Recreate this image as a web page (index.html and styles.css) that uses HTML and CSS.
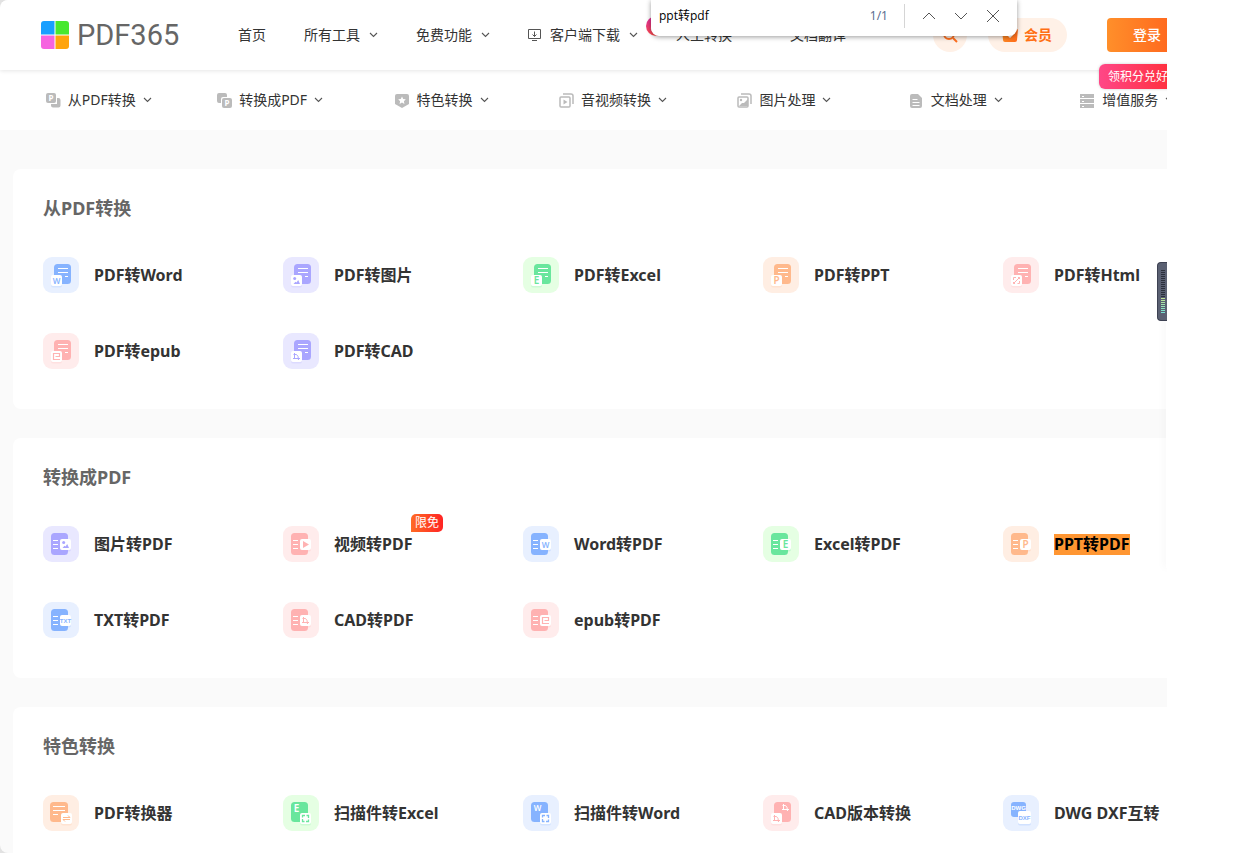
FILE: index.html
```html
<!DOCTYPE html>
<html lang="zh-CN">
<head>
<meta charset="utf-8">
<title>PDF365</title>
<link rel="stylesheet" href="styles.css">
</head>
<body>
<svg class="defs" aria-hidden="true">
  <defs>
    <linearGradient id="fire" x1="0" y1="0" x2="0" y2="1"><stop offset="0" stop-color="#d92ba0"/><stop offset="1" stop-color="#ff4b4b"/></linearGradient>
    <linearGradient id="crown" x1="0" y1="0" x2="1" y2="0"><stop offset="0" stop-color="#ff8b26"/><stop offset="1" stop-color="#ff6a1a"/></linearGradient>
    <g id="from"><rect x="11" y="7" width="17" height="20" rx="3.5" fill="currentColor"/><path d="M15 11.5h10M15 15.500h10M22 19.500h3" stroke="#fff"/><rect x="8" y="19" width="11" height="11.500" rx="2" fill="currentColor" opacity=".2"/><rect x="8" y="18" width="11" height="11" rx="2" fill="#fff"/></g>
    <g id="to"><rect x="8" y="7" width="17" height="22" rx="3.5" fill="currentColor"/><path d="M10 14.500h5M10 18.500h5M10 22.500h5" stroke="#fff"/><rect x="17" y="14" width="11" height="11.500" rx="2" fill="currentColor" opacity=".25"/><rect x="17" y="13" width="11" height="11" rx="2" fill="#fff"/></g>
    <g id="scan"><rect x="8" y="7" width="17" height="20" rx="3.5" fill="currentColor"/><rect x="17" y="19" width="11" height="11.500" rx="2" fill="currentColor" opacity=".2"/><rect x="17" y="18" width="11" height="11" rx="2" fill="#fff"/><path d="M19.500 22.500v-2H22M23.500 20.500h2V23M25.500 24.500v2H23M21.500 26.500h-2V24" fill="none" stroke="currentColor" stroke-width="1.300"/></g>
    <g id="pic" fill="currentColor"><circle cx="-1.800" cy="-2" r="1.500"/><path d="M-3 3.500 -1 1.200 0 2 1.700 -.5 3.500 3.500z"/></g>
    <path id="cad" d="M-2-3.500V2M-3.500 2H3.500M-3-2H0Q2-1 2 3.500" fill="none" stroke="currentColor"/>
    <path id="epub" d="M3.500 3H-3V-3H3V0H-1" fill="none" stroke="currentColor" stroke-width="1.200"/>
    <path id="chev" d="m1 1 3.500 3.500L8 1" fill="none" stroke="#555" stroke-width="1.100"/>
  </defs>
</svg>
<div class="frame">
<div class="page">
  <header class="header">
    <a class="logo" href="#" aria-label="PDF365">
      <svg width="28" height="28" viewBox="0 0 28 28"><path d="M3 0H13.500V13.500H0V3Q0 0 3 0" fill="#189fff"/><path d="M14.500 0H25q3 0 3 3v10.500H14.500" fill="#48e82e"/><path d="M0 14.500H13.500V28H3Q0 28 0 25" fill="#f663e0"/><path d="M14.500 14.500H28V25q0 3-3 3H14.500" fill="#ffa40c"/></svg>
      <span>PDF365</span>
    </a>
    <nav class="nav">
      <a href="#">首页</a>
      <a href="#">所有工具<svg width="9" height="6"><use href="#chev"/></svg></a>
      <a href="#">免费功能<svg width="9" height="6"><use href="#chev"/></svg></a>
      <a href="#"><svg width="13" height="12" viewBox="0 0 13 12" fill="none" stroke="#555"><path d="M.5.5h12v9H.5zM4 11.500h5M6.500 2.500v5M4.500 5.500l2 2 2-2"/></svg>客户端下载<svg width="9" height="6"><use href="#chev"/></svg></a>
      <a href="#"><svg class="flame" width="20" height="20" viewBox="0 0 20 20"><circle cx="10" cy="10" r="10" fill="url(#fire)"/><path d="M10 3q1 4 4 6 2 6-4 8-6-1-5-7l2 2q0-6 3-9" fill="#fff"/></svg>人工转换</a>
      <a class="translate" href="#">文档翻译</a>
    </nav>
    <button class="search" aria-label="搜索"><svg width="16" height="16" viewBox="0 0 16 16" fill="none" stroke="#ff6f1e" stroke-width="2"><circle cx="7" cy="7" r="5"/><path d="m11 11 4 4"/></svg></button>
    <a class="vip" href="#"><svg width="18" height="16" viewBox="0 0 18 16"><path d="M1 2 5 5 9 0l4 5 4-3-1 11q0 2-2 2H4q-2 0-2-2z" fill="url(#crown)"/><path d="m6 7 3 3 3-3" fill="none" stroke="#fff" stroke-width="1.500"/></svg>会员</a>
    <div class="account"><button class="login">登录</button><span class="gift">领积分兑好礼</span></div>
  </header>

  <nav class="subnav">
    <a href="#"><svg width="15" height="15" viewBox="0 0 15 15"><rect width="10" height="10" rx="2" fill="#bbb"/><path d="M11 5h1.500q2 0 2 2v5.500q0 2-2 2H7q-2 0-2-2V11h6z" fill="#bbb"/><text x="5" y="8" class="mini">P</text></svg>从PDF转换<svg width="9" height="6"><use href="#chev"/></svg></a>
    <a href="#"><svg width="15" height="15" viewBox="0 0 15 15"><path d="M2 0h6q2 0 2 2v2H6Q4 4 4 6v4H2Q0 10 0 8V2Q0 0 2 0" fill="#bbb"/><rect x="5" y="5" width="10" height="10" rx="2" fill="#bbb"/><text x="10" y="13" class="mini">P</text></svg>转换成PDF<svg width="9" height="6"><use href="#chev"/></svg></a>
    <a href="#"><svg width="15" height="15" viewBox="0 0 15 15"><path d="M2 1h10q2 0 2 2v8l-7 4-7-4V3q0-2 2-2" fill="#bbb"/><path d="m7 3.500 1.200 2.500 2.600.3-1.900 1.900.5 2.700L7 9.600l-2.400 1.300.5-2.700-1.900-1.900L5.800 6z" fill="#fff"/></svg>特色转换<svg width="9" height="6"><use href="#chev"/></svg></a>
    <a href="#"><svg width="15" height="15" viewBox="0 0 15 15" fill="none" stroke="#bbb" stroke-width="1.500"><path d="M4 1h8q2 0 2 2v8"/><rect x="1" y="4" width="10" height="10" rx="1"/><path d="m4.500 6.500 4 2.500-4 2.500z" fill="#bbb" stroke="none"/></svg>音视频转换<svg width="9" height="6"><use href="#chev"/></svg></a>
    <a href="#"><svg width="15" height="15" viewBox="0 0 15 15" fill="none" stroke="#bbb" stroke-width="1.500"><path d="M4 1h8q2 0 2 2v8"/><rect x="1" y="4" width="10" height="10" rx="1"/><circle cx="4" cy="7" r="1.200" fill="#bbb" stroke="none"/><path d="m2 13 3-3h2l4-4v7z" fill="#bbb" stroke="none"/></svg>图片处理<svg width="9" height="6"><use href="#chev"/></svg></a>
    <a href="#"><svg width="15" height="15" viewBox="0 0 15 15"><path d="M3 1h6l4 4v8q0 2-2 2H3q-2 0-2-2V3q0-2 2-2" fill="#bbb"/><path d="M3.500 6.500h5M3.500 9.500h7M3.500 12.500h7" stroke="#fff"/></svg>文档处理<svg width="9" height="6"><use href="#chev"/></svg></a>
    <a href="#"><svg width="15" height="15" viewBox="0 0 15 15"><path d="M0 1h14v4H0zM0 6h14v4H0zM0 11h14v4H0z" fill="#bbb"/><path d="M2 3.500h2M2 8.500h2M2 13.500h2" stroke="#fff"/></svg>增值服务<svg width="9" height="6"><use href="#chev"/></svg></a>
  </nav>

  <main class="content">
    <section class="card">
      <h2>从PDF转换</h2>
      <div class="tools">
        <a href="#"><svg class="tile blue" viewBox="0 0 36 36"><use href="#from"/><text x="13.500" y="26.500">W</text></svg>PDF转Word</a>
        <a href="#"><svg class="tile purple" viewBox="0 0 36 36"><use href="#from"/><use href="#pic" x="13.500" y="23.500"/></svg>PDF转图片</a>
        <a href="#"><svg class="tile green" viewBox="0 0 36 36"><use href="#from"/><text x="13.500" y="27" class="big">E</text></svg>PDF转Excel</a>
        <a href="#"><svg class="tile orange" viewBox="0 0 36 36"><use href="#from"/><text x="13.500" y="27" class="big">P</text></svg>PDF转PPT</a>
        <a href="#"><svg class="tile pink" viewBox="0 0 36 36"><use href="#from"/><path d="M10.500 23v-2.500H13M14.500 26.500h2V24M16.500 20.500l-6 6M15 20.500h1.500V22M12 26.500h-1.500V25" fill="none" stroke="currentColor"/></svg>PDF转Html</a>
        <a href="#"><svg class="tile pink" viewBox="0 0 36 36"><use href="#from"/><use href="#epub" x="13.500" y="23.500"/></svg>PDF转epub</a>
        <a href="#"><svg class="tile purple" viewBox="0 0 36 36"><use href="#from"/><use href="#cad" x="13.500" y="23.500"/></svg>PDF转CAD</a>
      </div>
    </section>
    <section class="card">
      <h2>转换成PDF</h2>
      <div class="tools">
        <a href="#"><svg class="tile purple" viewBox="0 0 36 36"><use href="#to"/><use href="#pic" x="22.500" y="18.500"/></svg>图片转PDF</a>
        <a href="#"><svg class="tile pink" viewBox="0 0 36 36"><use href="#to"/><path d="m20 15 6 3.500-6 3.500z" fill="currentColor"/></svg>视频转PDF<span class="free">限免</span></a>
        <a href="#"><svg class="tile blue" viewBox="0 0 36 36"><use href="#to"/><text x="22.500" y="21.500">W</text></svg>Word转PDF</a>
        <a href="#"><svg class="tile green" viewBox="0 0 36 36"><use href="#to"/><text x="22.500" y="22" class="big">E</text></svg>Excel转PDF</a>
        <a href="#"><svg class="tile orange" viewBox="0 0 36 36"><use href="#to"/><text x="22.500" y="22" class="big">P</text></svg><mark>PPT转PDF</mark></a>
        <a href="#"><svg class="tile blue" viewBox="0 0 36 36"><use href="#to"/><text x="22.500" y="20.500" class="small">TXT</text></svg>TXT转PDF</a>
        <a href="#"><svg class="tile pink" viewBox="0 0 36 36"><use href="#to"/><use href="#cad" x="22.500" y="18.500"/></svg>CAD转PDF</a>
        <a href="#"><svg class="tile pink" viewBox="0 0 36 36"><use href="#to"/><use href="#epub" x="22.500" y="18.500"/></svg>epub转PDF</a>
      </div>
    </section>
    <section class="card">
      <h2>特色转换</h2>
      <div class="tools">
        <a href="#"><svg class="tile orange" viewBox="0 0 36 36"><rect x="7" y="7" width="18" height="20" rx="3.500" fill="currentColor"/><path d="M10 11.500h12M10 15.500h12M10 19.500h5" stroke="#fff"/><rect x="18" y="19" width="11" height="11.500" rx="2" fill="currentColor" opacity=".2"/><rect x="18" y="18" width="11" height="11" rx="2" fill="#fff"/><path d="M20 22.500h7l-2-2M27 24.500h-7l2 2" fill="none" stroke="currentColor"/></svg>PDF转换器</a>
        <a href="#"><svg class="tile green" viewBox="0 0 36 36"><use href="#scan"/><text x="13.500" y="17" class="big white">E</text></svg>扫描件转Excel</a>
        <a href="#"><svg class="tile blue" viewBox="0 0 36 36"><use href="#scan"/><text x="14.500" y="15.500" class="white">W</text></svg>扫描件转Word</a>
        <a href="#"><svg class="tile pink" viewBox="0 0 36 36"><rect x="11" y="7" width="17" height="20" rx="3.500" fill="currentColor"/><rect x="8" y="19" width="11" height="11.500" rx="2" fill="currentColor" opacity=".2"/><rect x="8" y="18" width="11" height="11" rx="2" fill="#fff"/><use href="#cad" x="22.500" y="12.500" class="white"/><use href="#cad" x="13.500" y="23.500"/></svg>CAD版本转换</a>
        <a href="#"><svg class="tile blue" viewBox="0 0 36 36"><rect x="8" y="7" width="15" height="15" rx="3" fill="currentColor"/><rect x="15" y="17" width="13" height="13.500" rx="2" fill="currentColor" opacity=".25"/><rect x="15" y="16" width="13" height="13" rx="2" fill="#fff"/><text x="15.500" y="15" class="small white">DWG</text><text x="21.500" y="25" class="small">DXF</text></svg>DWG DXF互转</a>
      </div>
    </section>
  </main>
</div>
<div class="drawer"></div>
<div class="gauge"><span></span></div>
<form class="find" role="search">
  <input type="text" value="ppt转pdf" aria-label="在页面上查找">
  <output>1/1</output>
  <i></i>
  <button type="button" aria-label="上一个"><svg width="14" height="14" viewBox="0 0 14 14"><path d="m1 10 6-6 6 6"/></svg></button>
  <button type="button" aria-label="下一个"><svg width="14" height="14" viewBox="0 0 14 14"><path d="m1 4 6 6 6-6"/></svg></button>
  <button type="button" aria-label="关闭"><svg width="14" height="14" viewBox="0 0 14 14"><path d="m1 1 12 12M13 1 1 13"/></svg></button>
</form>
</div>
</body>
</html>
```

FILE: styles.css
```css
* { box-sizing: border-box; }
body {
  margin: 0;
  padding-right: 74px;
  min-height: 100vh;
  background: linear-gradient(90deg, #e2e2e2 20px, #fff 20px);
  font: 14px/20px "Noto Sans", "Noto Sans CJK SC", sans-serif;
  color: #333;
  overflow: hidden;
}
a { color: inherit; text-decoration: none; }
button { border: 0; padding: 0; background: none; font: inherit; cursor: pointer; }
.defs { position: absolute; width: 0; height: 0; }
.frame {
  position: relative;
  height: 100vh;
  overflow: hidden;
  border-radius: 8px 0 0 8px;
  background: #fafafa;
}
.page { min-width: 1226px; }

.header {
  position: relative;
  display: flex;
  align-items: center;
  height: 70px;
  padding-left: 41px;
  background: #fff;
  box-shadow: 0 1px 4px rgba(0, 0, 0, .1);
}
.logo {
  display: flex;
  align-items: center;
  gap: 8px;
  width: 139px;
  margin-right: 58px;
  font: 400 29px/30px Roboto, sans-serif;
  color: #666;
}
.logo svg { flex: none; }
.nav { display: flex; gap: 38px; margin-right: 87px; }
.nav a { position: relative; display: flex; align-items: center; gap: 9px; white-space: nowrap; }
.nav .translate { margin-left: 20px; }
.flame { position: absolute; left: -30px; top: -9px; }
.search {
  display: flex;
  align-items: center;
  justify-content: center;
  width: 34px;
  height: 34px;
  margin-right: 21px;
  border-radius: 50%;
  background: #fff1e7;
}
.vip {
  display: flex;
  align-items: center;
  gap: 5px;
  height: 34px;
  margin-right: 40px;
  padding: 0 15px 0 13px;
  border-radius: 17px;
  background: #fff1e7;
  color: #ff6f14;
  font-weight: 700;
}
.account { position: relative; }
.login {
  width: 80px;
  height: 34px;
  border-radius: 4px;
  background: linear-gradient(90deg, #ff8f2a, #ff5f1c);
  color: #fff;
  font-weight: 500;
}
.gift {
  position: absolute;
  left: -8px;
  top: 46px;
  padding: 0 9px;
  border-radius: 6px;
  background: linear-gradient(90deg, #ff4787, #ff2a2a);
  box-shadow: 0 0 3px rgba(0, 0, 0, .2);
  color: #fff;
  font-size: 12px;
  line-height: 25px;
  white-space: nowrap;
}

.subnav {
  display: grid;
  grid-template-columns: repeat(7, 1fr);
  height: 60px;
  padding: 0 13px;
  background: #fff;
}
.subnav a { display: flex; align-items: center; justify-content: center; gap: 7px; }
.mini { fill: #fff; font-size: 8px; font-weight: 700; text-anchor: middle; }

.content { display: grid; gap: 29px; padding: 39px 13px; }
.card { padding: 26px 0 40px 30px; border-radius: 8px; background: #fff; }
.card h2 { margin: 0 0 36px; font-size: 18px; line-height: 26px; font-weight: 700; color: #666; }
.tools { display: grid; grid-template-columns: repeat(5, 240px); gap: 40px 0; }
.tools a {
  position: relative;
  display: flex;
  align-items: center;
  justify-self: start;
  gap: 15px;
  font-size: 16px;
  font-weight: 700;
  white-space: nowrap;
}
.tools mark { background: #ff9632; color: #000; line-height: 21px; }
.tile { width: 36px; height: 36px; border-radius: 9px; }
.tile text { fill: currentColor; font-size: 8px; font-weight: 600; text-anchor: middle; }
.tile .big { font-size: 10px; }
.tile .small { font: 700 6px "Liberation Sans Narrow", "Liberation Sans", sans-serif; }
.tile .white { fill: #fff; color: #fff; }
.blue { color: #86b3ff; background: #e8f0ff; }
.purple { color: #aaa6ff; background: #e9e8ff; }
.green { color: #69e69d; background: #e5ffe3; }
.orange { color: #ffb98c; background: #ffeee3; }
.pink { color: #ffb2b2; background: #ffecec; }
.free {
  position: absolute;
  left: 128px;
  top: -12px;
  width: 32px;
  border-radius: 5px 5px 5px 0;
  background: linear-gradient(90deg, #ff6a25, #ff2424);
  color: #fff;
  font-size: 12px;
  line-height: 18px;
  font-weight: 400;
  text-align: center;
}

.drawer {
  position: absolute;
  right: 0;
  top: 270px;
  width: 1px;
  height: 298px;
  background: #fff;
  box-shadow: 0 0 8px rgba(0, 0, 0, .2);
}
.gauge {
  position: absolute;
  right: 0;
  top: 262px;
  width: 10px;
  height: 59px;
  padding: 6px 2px 6px 3px;
  border: 1px solid #3d4152;
  border-right: 0;
  border-radius: 4px 0 0 4px;
  background: #5a6072;
}
.gauge span {
  display: block;
  height: 100%;
  background:
    repeating-linear-gradient(#5a6072 0 1px, transparent 1px 2px),
    linear-gradient(#2c303c 0 28px, #c8e68c 28px, #6fe0d8);
}

.find {
  position: absolute;
  left: 651px;
  top: 0;
  display: flex;
  align-items: center;
  width: 366px;
  height: 36px;
  padding: 0 17px 4px 8px;
  border-radius: 0 0 8px 8px;
  background: #fff;
  box-shadow: 0 1px 5px rgba(0, 0, 0, .4);
}
.find input {
  flex: 1;
  min-width: 0;
  padding: 0;
  border: 0;
  outline: 0;
  font: 12px/20px "Open Sans", "Noto Sans CJK SC", sans-serif;
  color: #000;
}
.find output { font-size: 12px; color: #5c6f91; }
.find i { width: 1px; height: 24px; margin: 0 17px 0 16px; background: #d5d5d5; }
.find button { display: flex; margin-right: 18px; }
.find button:last-child { margin-right: 0; }
.find button svg { fill: none; stroke: #555; }
```
